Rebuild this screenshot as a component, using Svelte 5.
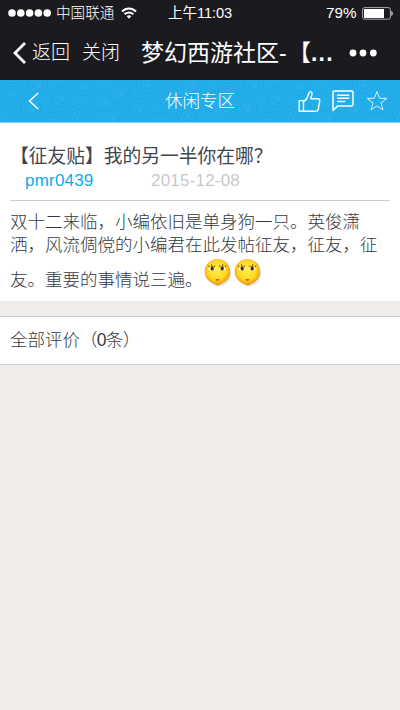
<script lang="ts">
  const signal = [0, 1, 2, 3, 4];
  const faces = [0, 1];
  const swirls = [
    [12, 13], [38, 4], [61, 17], [84, 6], [104, 22],
    [31, 28], [79, 34], [5, 38], [52, 42], [120, 5],
  ];

  const post = {
    title: '【征友贴】我的另一半你在哪？',
    author: 'pmr0439',
    date: '2015-12-08',
  };
  const lines = [
    '双十二来临，小编依旧是单身狗一只。英俊潇',
    '洒，风流倜傥的小编君在此发帖征友，征友，征',
  ];
  let comments = 0;
</script>

<div class="page">
  <header class="top">
    <div class="status">
      <svg class="status__signal" width="43" height="10" viewBox="0 0 43 10">
        {#each signal as i}
          <circle cx={4 + i * 8.8} cy="5" r="3.8" fill="#fff" />
        {/each}
      </svg>
      <span class="status__carrier">中国联通</span>
      <svg class="status__wifi" width="16" height="12" viewBox="0 0 16 12" fill="none" stroke="#fff" stroke-width="2">
        <path d="M1 4.5C5 .4 11 .4 15 4.5M3.6 7.3c2.5-2.5 6.3-2.5 8.8 0" />
        <path d="M5.7 9.2c1.3-1.2 3.3-1.2 4.6 0L8 11.7z" fill="#fff" stroke="none" />
      </svg>
      <span class="status__time">上午11:03</span>
      <span class="status__percent">79%</span>
      <svg class="status__battery" width="32" height="13" viewBox="0 0 32 13">
        <rect x=".6" y=".6" width="27.8" height="11.6" rx="2" fill="none" stroke="#aaa" stroke-width="1" />
        <rect x="2" y="2" width="20" height="9" fill="#fff" />
        <path d="M29.3 4c2 .5 2 4.5 0 5z" fill="#ccc" />
      </svg>
    </div>
    <nav class="nav">
      <svg class="nav__arrow" width="14" height="22" viewBox="0 0 14 22">
        <path d="M12 1L2 11l10 10" fill="none" stroke="#fff" stroke-width="2.8" />
      </svg>
      <span class="nav__back">返回</span>
      <span class="nav__close">关闭</span>
      <span class="nav__title">梦幻西游社区-</span>
      <span class="nav__rest">【</span>
      <span class="nav__dots">...</span>
      <svg class="nav__more" width="28" height="8" viewBox="0 0 28 8" fill="#fff">
        <circle cx="4" cy="4" r="3.4" />
        <circle cx="14" cy="4" r="3.4" />
        <circle cx="24.3" cy="4" r="3.4" />
      </svg>
    </nav>
  </header>

  <div class="bar">
    <svg class="bar__pattern" width="400" height="42">
      <defs>
        <pattern id="swirl" width="108" height="48" patternUnits="userSpaceOnUse">
          {#each swirls as [x, y]}
            <g transform="translate({x} {y})" fill="none" stroke="#159cdc" stroke-width=".9">
              <circle r="9.5" fill="#2cb3ee" />
              <path d="M-7 1A7 7 0 1 1 0 7A5 5 0 0 1-5 2A5 5 0 1 1 4 3A3 3 0 0 1-2 0A2 2 0 0 1 2 0" />
            </g>
          {/each}
        </pattern>
      </defs>
      <rect width="400" height="42" fill="url(#swirl)" opacity=".6" />
    </svg>
    <svg class="bar__back" width="12" height="18" viewBox="0 0 12 18">
      <path d="M10.2 1L1.5 9l8.7 8" fill="none" stroke="#fff" stroke-width="1.5" />
    </svg>
    <span class="bar__title">休闲专区</span>
    <svg class="bar__icon" width="23" height="23" viewBox="0 0 23 23" fill="none" stroke="#fff" stroke-width="1.4" stroke-linejoin="round">
      <path d="M1.2 10.6h4.3v10.6H1.2zM5.5 11.3c3-1.2 4.4-4.3 5-7.3.4-2.8 3.5-3.2 3.5-.6 0 2-.8 3.7-1.2 5.3h7c1.3 0 2.1.9 1.9 2.1l-1.4 8.4c-.2 1.2-.9 2-2.2 2H5.5" />
    </svg>
    <svg class="bar__icon bar__icon--chat" width="22" height="22" viewBox="0 0 22 22" fill="none" stroke="#fff" stroke-width="1.5" stroke-linejoin="round">
      <path d="M2.4 1h17.3c.7 0 1.3.6 1.3 1.3v12.3c0 .7-.6 1.3-1.3 1.3H5.8L1 20.5V2.3C1 1.6 1.6 1 2.4 1z" />
      <path d="M5.2 5.2h12M5.2 8.3h12M5.2 11.4h8" />
    </svg>
    <svg class="bar__icon bar__icon--star" width="22" height="22" viewBox="0 0 22 22">
      <path d="M11 1.4l2.5 6.8 7.2.3-5.7 4.4 2 7-6-4-6 4 2-7-5.7-4.4 7.2-.3z" fill="none" stroke="#d5f1fd" />
    </svg>
  </div>

  <article class="post">
    <h1 class="post__title">{post.title}</h1>
    <div class="post__meta">
      <span class="post__author">{post.author}</span>
      <span class="post__date">{post.date}</span>
    </div>
    <div class="post__body">
      {#each lines as line}
        <p>{line}</p>
      {/each}
      <p class="post__last">
        <span>友。重要的事情说三遍。</span>
        {#each faces as i}
          <svg class="post__face" width="30" height="30" viewBox="0 0 30 30">
            <defs>
              <radialGradient id="face{i}" cx=".48" cy=".4" r=".62">
                <stop offset="0" stop-color="#fff04f" />
                <stop offset=".6" stop-color="#ffd91f" />
                <stop offset="1" stop-color="#e9930c" />
              </radialGradient>
            </defs>
            <ellipse cx="16" cy="16.2" rx="12.2" ry="12" fill="#ddd" opacity=".65" />
            <path d="M14.5 1.4c7.3 0 12.4 5.2 12.4 12.3 0 6-3.3 9.4-7.4 11.4-2 1-3 2.2-4.7 2.2s-3-1.3-5-2.3C5.6 23 2 19.6 2 13.7 2 6.6 7.2 1.4 14.5 1.4z" fill="url(#face{i})" stroke="#df9420" stroke-width=".5" />
            <path d="M5.2 7.4l1 2M8.7 6.2v2.5M12 7.4l-.9 1.8M16.4 7.4l1 2M19.7 6.2v2.5M23 7.4l-.9 1.8" stroke="#7d4e10" />
            <ellipse cx="8.6" cy="10.8" rx="3.3" ry="2" fill="#fff3b8" />
            <ellipse cx="19.6" cy="10.8" rx="3.3" ry="2" fill="#fff3b8" />
            <ellipse cx="9.2" cy="10.4" rx="1.6" ry="2.2" fill="#4a2c0a" />
            <ellipse cx="19.2" cy="10.4" rx="1.6" ry="2.2" fill="#4a2c0a" />
            <path d="M12.2 21.6q2.2-1 4.4 0-2.2 2.4-4.4 0z" fill="#b4561d" />
          </svg>
        {/each}
      </p>
    </div>
  </article>

  <section class="comments">全部评价<span class="comments__count">（{comments}条）</span></section>
</div>

<style>
  :global(body) {
    background: #f0ecea;
  }

  .page {
    width: 400px;
    height: 710px;
    overflow: hidden;
    background: #f0ecea;
    color: #343943;
    font-family: 'Liberation Sans', 'Noto Sans CJK SC', sans-serif;
    font-weight: 300;
    white-space: nowrap;
  }

  .top {
    height: 80px;
    background: #1b1b1f;
    color: #fff;
  }

  .status {
    display: flex;
    align-items: center;
    height: 26px;
    padding-left: 8px;
    font-size: 14.6px;
    line-height: 26px;
  }

  .status__carrier {
    margin-left: 5px;
    width: 59px;
  }

  .status__wifi {
    margin-left: 6px;
  }

  .status__time {
    margin-left: 31px;
    width: 64px;
    font-weight: 400;
    letter-spacing: -0.1px;
  }

  .status__percent {
    width: 32px;
    margin-left: 94px;
    font-size: 15.2px;
  }

  .status__battery {
    margin-left: 4px;
  }

  .nav {
    display: flex;
    align-items: center;
    height: 54px;
    padding-left: 13px;
    font-size: 19px;
    line-height: 54px;
  }

  .nav__back {
    width: 38px;
    margin-left: 5px;
  }

  .nav__close {
    width: 38px;
    margin-left: 12px;
  }

  .nav__title {
    margin-left: 21px;
    width: 146px;
    font-size: 23px;
    font-weight: 400;
  }

  .nav__rest {
    width: 23px;
    margin-left: 1px;
    font-size: 23px;
    font-weight: 400;
  }

  .nav__dots {
    width: 24px;
    font-size: 23px;
    font-weight: 700;
    letter-spacing: 1.2px;
  }

  .nav__more {
    margin-left: 14px;
  }

  .bar {
    position: relative;
    box-sizing: border-box;
    display: flex;
    align-items: center;
    height: 43px;
    padding-left: 28px;
    background: #22aeeb;
    border-bottom: 1px solid #7fd3f6;
    color: #fff;
  }

  .bar__pattern {
    position: absolute;
    top: 0;
    left: 0;
  }

  .bar__back,
  .bar__title,
  .bar__icon {
    position: relative;
  }

  .bar__title {
    width: 70px;
    margin-left: 125px;
    font-size: 17.5px;
    line-height: 40px;
  }

  .bar__icon {
    margin-left: 63px;
  }

  .bar__icon--chat {
    margin-left: 11px;
  }

  .bar__icon--star {
    margin-left: 12px;
  }

  .post {
    box-sizing: border-box;
    height: 178px;
    padding: 20px 10px 0;
    background: #fff;
  }

  .post__title {
    margin: 0;
    color: #40454e;
    font-size: 18.75px;
    font-weight: 400;
    line-height: 28px;
  }

  .post__meta {
    box-sizing: border-box;
    display: flex;
    height: 30px;
    padding-left: 15px;
    border-bottom: 1px solid #ccc;
    font-size: 17px;
    line-height: 20px;
  }

  .post__author {
    width: 126px;
    color: #12a8ec;
    letter-spacing: 0.2px;
  }

  .post__date {
    color: #c8c8c8;
    letter-spacing: 0.2px;
  }

  .post__body {
    padding-top: 10px;
    font-size: 17.5px;
    line-height: 23px;
  }

  .post__body p {
    margin: 0;
  }

  .post__body .post__last {
    display: flex;
    height: 46px;
    line-height: 46px;
  }

  .post__face {
    margin-top: 1px;
  }

  .comments {
    box-sizing: border-box;
    height: 49px;
    margin-top: 15px;
    padding-left: 10px;
    border-top: 1px solid #ccc;
    border-bottom: 1px solid #ccc;
    background: #fff;
    font-size: 17.5px;
    line-height: 46px;
  }

  .comments__count {
    letter-spacing: -0.7px;
  }
</style>
